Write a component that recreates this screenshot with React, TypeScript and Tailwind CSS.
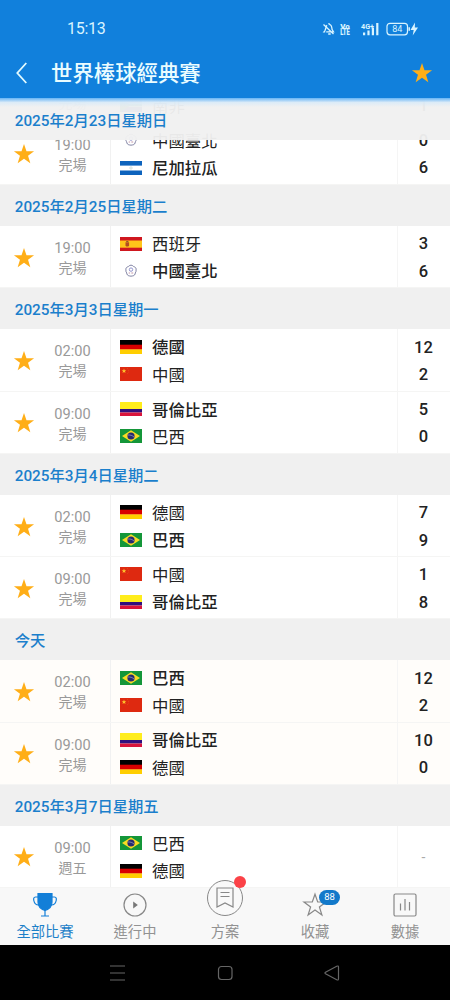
import React from 'react';

type Team = { code: string; name: string; score: string; win?: boolean };
type Match = { time: string; status: string; teams: [Team, Team] };
type Day = { date: string; today?: boolean; matches: Match[] };

const t = (code: string, name: string, score: string, win = false): Team => ({ code, name, score, win });

const earlier: Match[] = [
  { time: '14:00', status: '完場', teams: [t('ni', '尼加拉瓜', '5', true), t('za', '南非', '1')] },
  { time: '19:00', status: '完場', teams: [t('tw', '中國臺北', '0'), t('ni', '尼加拉瓜', '6', true)] },
];

const days: Day[] = [
  { date: '2025年2月25日星期二', matches: [{ time: '19:00', status: '完場', teams: [t('es', '西班牙', '3'), t('tw', '中國臺北', '6', true)] }] },
  {
    date: '2025年3月3日星期一',
    matches: [
      { time: '02:00', status: '完場', teams: [t('de', '德國', '12', true), t('cn', '中國', '2')] },
      { time: '09:00', status: '完場', teams: [t('co', '哥倫比亞', '5', true), t('br', '巴西', '0')] },
    ],
  },
  {
    date: '2025年3月4日星期二',
    matches: [
      { time: '02:00', status: '完場', teams: [t('de', '德國', '7'), t('br', '巴西', '9', true)] },
      { time: '09:00', status: '完場', teams: [t('cn', '中國', '1'), t('co', '哥倫比亞', '8', true)] },
    ],
  },
  {
    date: '今天',
    today: true,
    matches: [
      { time: '02:00', status: '完場', teams: [t('br', '巴西', '12', true), t('cn', '中國', '2')] },
      { time: '09:00', status: '完場', teams: [t('co', '哥倫比亞', '10', true), t('de', '德國', '0')] },
    ],
  },
  { date: '2025年3月7日星期五', matches: [{ time: '09:00', status: '週五', teams: [t('br', '巴西', ''), t('de', '德國', '')] }] },
];

const STAR = 'M12 1.2 14.7 9H23L16.4 13.9 18.9 22 12 17.1 5.1 22 7.6 13.9 1 9H9.3Z';

function Star() {
  return (
    <svg viewBox="0 0 24 24" className="size-[22px] shrink-0">
      <path d={STAR} fill="#ffae17" />
    </svg>
  );
}

function FlagArt({ code }: { code: string }) {
  switch (code) {
    case 'de':
      return (<><path fill="#000" d="M0 0h22v5H0z" /><path fill="#d80000" d="M0 4.7h22v5H0z" /><path fill="#ffce00" d="M0 9.4h22V14H0z" /></>);
    case 'cn':
      return (
        <>
          <path fill="#de2910" d="M0 0h22v14H0z" />
          <path fill="#ffc52c" d="m4 1.600.6 1.700h1.700L5 4.300l.5 1.700L4 5 2.500 6 3 4.300 1.700 3.300h1.700z" />
          <g fill="#ee7a22">
            <circle cx="7.500" cy="1.700" r=".35" /><circle cx="8.500" cy="3.200" r=".35" />
            <circle cx="8.500" cy="5" r=".35" /><circle cx="7.500" cy="6.500" r=".35" />
          </g>
        </>
      );
    case 'co':
      return (<><path fill="#ffed1c" d="M0 0h22v7H0z" /><path fill="#31107e" d="M0 7h22v3.5H0z" /><path fill="#d9143b" d="M0 10.5h22V14H0z" /></>);
    case 'br':
      return (
        <>
          <path fill="#149639" d="M0 0h22v14H0z" />
          <path fill="#f8db24" d="M11 1.200 20 7l-9 5.800L2 7z" />
          <circle cx="11" cy="7" r="3.600" fill="#272a70" />
          <path d="M7.900 6c2.300-.2 4.400.4 6.100 2" fill="none" stroke="#b5bbd0" strokeWidth=".6" />
        </>
      );
    case 'es':
      return (
        <>
          <path fill="#cf171f" d="M0 0h22v14H0z" /><path fill="#ffc51a" d="M0 3.500h22v7.200H0z" />
          <path fill="#b34b22" d="M5.500 5.200h3.600v3.500c-1 1.200-2.600 1.200-3.600 0z" /><path fill="#8f5b2b" d="M6.200 4h2.200v1H6.200z" />
        </>
      );
    case 'ni':
      return (<><path fill="#0d63bd" d="M0 0h22v14H0z" /><path fill="#fff" d="M0 4.600h22v4.900H0z" /><circle cx="11" cy="7" r="1.200" fill="none" stroke="#b7c9c3" strokeWidth=".6" /></>);
    case 'tw':
      return (
        <g fill="none" stroke="#62648d" strokeWidth=".8">
          <path d="M11 1.200c1.500 0 2.200 1 2.800 1.500 1.500.2 2.700 1.600 2.300 3.200.2 1.500-.3 2.400-.8 3-.1 1.700-1 2.800-2.600 3-.8.4-2.600.4-3.400 0-1.600-.2-2.500-1.300-2.600-3-.5-.6-1-1.500-.8-3-.4-1.600.8-3 2.300-3.200.6-.5 1.300-1.500 2.800-1.500Z" />
          <circle cx="11" cy="5.600" r="1.700" stroke="#777ac0" />
          <path d="M8.700 9h1.400m1.200 0h1.900" stroke="#b37c91" />
        </g>
      );
    default:
      return (<><path fill="#d83a35" d="M0 0h22v5H0z" /><path fill="#1c3f9a" d="M0 9h22v5H0z" /><path fill="#138a57" d="M0 0l9 5.500h13v3H9L0 14z" /></>);
  }
}

function MatchRow({ match, today }: { match: Match; today?: boolean }) {
  const played = match.teams[0].score !== '';
  return (
    <div className={`flex h-[62.2px] border-b border-[#f5f5f4] ${today ? 'bg-[#fffdfa]' : 'bg-white'}`}>
      <div className="flex w-12 items-center justify-center pt-[2px]"><Star /></div>
      <div className="flex w-[63px] flex-col items-center border-r border-[#f1f1f1] pt-[12px] pr-[13px] text-[#999]">
        <span className="text-[14.6px] leading-[20px]">{match.time}</span>
        <span className="text-[14px] leading-[21px]">{match.status}</span>
      </div>
      <div className="flex flex-1 flex-col pt-[3.700px] pl-[9px]">
        {match.teams.map((team, i) => (
          <div key={i} className="flex h-[27.400px] items-center gap-[10px]">
            <svg viewBox="0 0 22 14" className="h-[14px] w-[22px] shrink-0"><FlagArt code={team.code} /></svg>
            <span className={`pt-[3px] text-[16.400px] leading-6 text-[#222] ${team.win ? 'font-medium' : 'font-normal'}`}>{team.name}</span>
          </div>
        ))}
      </div>
      <div className="flex w-[53px] flex-col items-center justify-center border-l border-[#f5f5f5] pt-[2px] pr-[1px]">
        {played ? match.teams.map((team, i) => (
          <span key={i} className="h-[27.400px] text-[16.500px] leading-[27.400px] font-medium text-[#222]">{team.score}</span>
        )) : <span className="text-[14px] text-[#aaa]">-</span>}
      </div>
    </div>
  );
}

function DateBar({ label }: { label: string }) {
  return (
    <h2 className="flex h-[41.100px] items-center bg-[#f0f0f0] pt-[4px] pl-[14.700px] text-[15.300px] font-medium text-[#1b7fcc]">{label}</h2>
  );
}

function StatusBar() {
  return (
    <div className="flex h-[58px] items-center pr-[28px] pl-[67px] text-[#d9f4ff]">
      <span className="flex-1 text-[16px] leading-5 -tracking-[0.300px]">15:13</span>
      <svg viewBox="0 0 100 16" className="mb-px h-4 w-[100px]" fill="none" stroke="currentColor">
        <path d="M4.200 10.800h7.300L10 8.300c-.2-2 0-4.500-2.800-5M5 4.300C3.400 6 4 8 2.800 9.800l-.8 1h1.200M6.200 13h2.500M1.500 3.500l10 9.500M7 2v1.500" strokeWidth="1.300" />
        <g fill="currentColor" stroke="none" fontFamily="Roboto, sans-serif" fontWeight="900">
          <text x="18.200" y="7.500" fontSize="8" textLength="9.500" lengthAdjust="spacingAndGlyphs">Vo</text>
          <text x="18.200" y="14.300" fontSize="8.500" textLength="9.500" lengthAdjust="spacingAndGlyphs">LTE</text>
          <text x="39" y="7.700" fontSize="7.500" fontWeight="700" textLength="13" lengthAdjust="spacingAndGlyphs">4G+</text>
          <path d="M41 11.500h2.200v2.700H41zM45.400 9.500h2.200v4.700h-2.200zM49.800 6.500H52v7.700h-2.200zM54.200 2h2.200v12.200h-2.200z" />
          <path d="M93 1.500 88.500 9h3.200l-1 5.500 5.300-8h-3.200z" />
        </g>
        <rect x="65" y="2.300" width="20.500" height="11.500" rx="3" strokeWidth="1.200" />
        <path d="M87.200 6.200v3.600" strokeWidth="1.500" />
        <text x="75.300" y="11.400" textAnchor="middle" fill="currentColor" stroke="none" fontFamily="Roboto, sans-serif" fontSize="9">84</text>
      </svg>
    </div>
  );
}

function TrophyIcon() {
  return (
    <svg viewBox="0 0 26 26" className="size-[26px]" fill="none" stroke="#137fd8" strokeWidth="1.200">
      <path d="M6 1.500h14v8.500c0 4-2.500 7-7 8.500C8.500 17 6 14 6 10z" fill="#137fd8" />
      <path d="M6 5H3.500C1.500 5 1.500 7 1.800 8.500s1.200 4.500 4.800 4.500M20 5h2.500c2 0 2 2 1.700 3.500s-1.200 4.500-4.800 4.500M13 18v5.500M9 24h8" />
    </svg>
  );
}

function PlayIcon() {
  return (
    <svg viewBox="0 0 26 26" className="size-[26px]"><circle cx="13" cy="13" r="11" fill="none" stroke="#888" strokeWidth="1.200" /><path d="m11.200 9.500 4.600 3.500-4.600 3.500z" fill="#777" /></svg>
  );
}

function FavouriteIcon() {
  return (
    <span className="relative size-[26px]">
      <svg viewBox="-1 -1 26 26" className="size-[26px]"><path d={STAR} fill="none" stroke="#888" strokeWidth="1.200" /></svg>
      <span className="absolute -top-[2px] left-[17px] flex h-[15px] w-[21px] items-center justify-center rounded-full bg-[#1379ca] text-[9.500px] text-white">88</span>
    </span>
  );
}

function ChartIcon() {
  return (
    <svg viewBox="0 0 26 26" className="size-[26px]" fill="none" stroke="#888" strokeWidth="1.200"><rect x="2" y="2" width="22" height="22" rx="1.500" /><path d="M8.500 11.500v7M13 7v11.500M17.500 10v8.500" /></svg>
  );
}

function PlanIcon() {
  return (
    <span className="relative -mt-[12px] mb-[2px] size-[36px] shrink-0 rounded-full border-[1.200px] border-[#888] bg-[#f9f9f9]">
      <svg viewBox="0 0 34 34" className="size-full" fill="none" stroke="#888" strokeWidth="1.200"><path d="M9 7h16v19l-8-4-8 4zM12.500 11.500h9M12.500 15.500h9" /></svg>
      <span className="absolute -top-[5px] -right-[4px] size-[12px] rounded-full bg-[#fb4247]" />
    </span>
  );
}

const tabs = [
  { label: '全部比賽', icon: <TrophyIcon /> },
  { label: '進行中', icon: <PlayIcon /> },
  { label: '方案', icon: <PlanIcon /> },
  { label: '收藏', icon: <FavouriteIcon /> },
  { label: '數據', icon: <ChartIcon /> },
];

export default function App() {
  return (
    <div className="flex h-[1000px] w-[450px] flex-col overflow-hidden bg-white font-[Roboto,'Noto_Sans_CJK_TC',sans-serif]">
      <header className="h-[98px] shrink-0 bg-[#1180dc]">
        <StatusBar />
        <div className="flex h-[30px] items-center pr-[17px] pl-[15px]">
          <svg viewBox="0 0 12 22" className="h-[22px] w-[12px]" fill="none" stroke="#e2faff" strokeWidth="1.800"><path d="m11.300 1-9 10 9 10" /></svg>
          <h1 className="ml-[24px] flex-1 pt-[2px] text-[21.400px] leading-[30px] font-medium text-[#eafcff]">世界棒球經典賽</h1>
          <Star />
        </div>
      </header>

      <main className="relative h-[789.500px] shrink-0 overflow-hidden">
        <div className="-mt-[37.300px]">
          {earlier.map((m, i) => <MatchRow key={i} match={m} />)}
          {days.map((day) => (
            <section key={day.date}>
              <DateBar label={day.date} />
              {day.matches.map((m, i) => <MatchRow key={i} match={m} today={day.today} />)}
            </section>
          ))}
        </div>
        <div className="absolute inset-x-0 top-0 h-[42px] bg-[#f0f0f0]/96">
          <h2 className="flex h-[42px] items-center pt-[4px] pl-[14.700px] text-[15.300px] font-medium text-[#1b7fcc]">2025年2月23日星期日</h2>
        </div>
        <div className="absolute inset-x-0 top-0 h-[9px] bg-linear-to-b from-[#65b4f5] via-[#d3e9fa]/70 to-transparent" />
      </main>

      <nav className="relative grid h-[57.500px] shrink-0 grid-cols-5 bg-[#f8f8f8]">
        {tabs.map((tab, i) => (
          <div key={tab.label} className={`flex flex-col items-center pt-[4px] text-[14.300px] ${i === 0 ? 'text-[#1d80c8]' : 'text-[#929292]'}`}>
            {tab.icon}
            <span className="mt-[4.500px] leading-5">{tab.label}</span>
          </div>
        ))}
      </nav>

      <footer className="flex h-[55px] items-center bg-black pl-[109px]">
        <svg viewBox="0 0 232 18" className="h-[18px] w-[232px]" fill="none" stroke="#666" strokeWidth="1.200">
          <path d="M1 2h15M1 9h15M1 16h15" />
          <rect x="109.500" y="2.500" width="13.500" height="13" rx="3" />
          <path d="M216.500 9.700q-1-.7 0-1.400l11.200-6.100q1.800-.7 1.800 1v11.600q0 1.700-1.800 1z" />
        </svg>
      </footer>
    </div>
  );
}
